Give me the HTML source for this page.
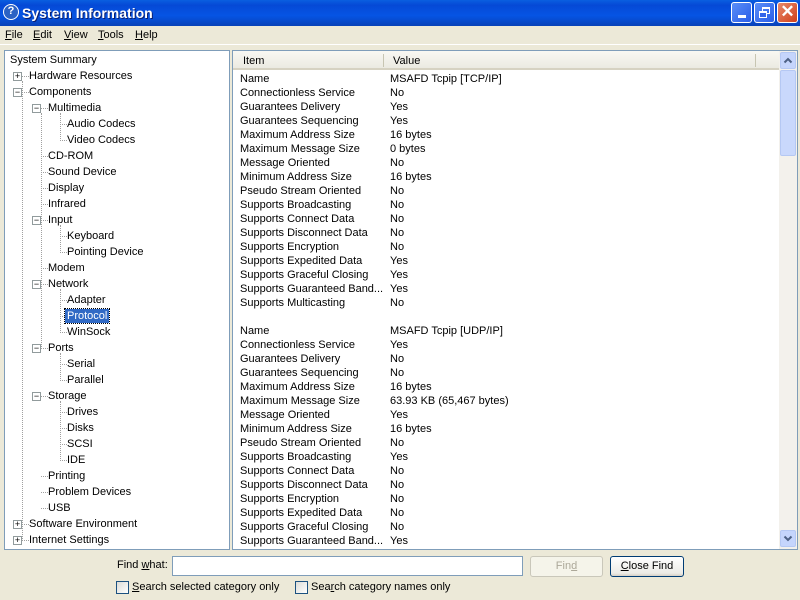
<!DOCTYPE html>
<html><head><style>
*{margin:0;padding:0;box-sizing:border-box}
body{width:800px;height:600px;overflow:hidden;background:#ece9d8;font-family:"Liberation Sans",Tahoma,sans-serif;font-size:11px;color:#000;position:relative}
.abs{position:absolute}
#title{left:0;top:0;width:800px;height:26px;background:linear-gradient(#0a5fe0,#0549d6 20%,#0654e4 60%,#0842b8);}
#title span{position:absolute;left:22px;top:5px;color:#fff;font-weight:bold;font-size:14px;text-shadow:1px 1px #0a1e6e}
.tb{position:absolute;top:2px;width:21px;height:21px;border:1px solid #fff;border-radius:3px;background:linear-gradient(135deg,#5a8ef8,#2a5ee8)}
#menu{top:26px;left:0;width:800px;height:19px;border-bottom:1px solid #fff}
#menu span{position:absolute;top:3px}
.pane{background:#fff;border:1px solid #7f9db9}
.t{position:absolute;height:14px;line-height:14px;white-space:nowrap}
.exp{position:absolute;width:9px;height:9px;border:1px solid #919b9c;background:#fff;font-size:9px;line-height:7px;text-align:center;color:#000}
.h{position:absolute;width:7px;border-top:1px dotted #a0a0a0}
.btn{position:absolute;border:1px solid #003c74;border-radius:3px;background:linear-gradient(#fff,#ecebe6 85%,#d6d0c5);text-align:center;line-height:19px}
.cb{position:absolute;width:13px;height:13px;border:1px solid #1c5180;background:linear-gradient(135deg,#dcdcd7,#fff)}
</style></head><body>
<div id="title" class="abs">
<div class="abs" style="left:3px;top:4px;width:16px;height:16px;border-radius:50%;background:#2b62c4;border:1.5px solid #fff;color:#fff;font-weight:bold;font-size:11px;line-height:13px;text-align:center">?</div>
<span>System Information</span>
<div class="tb" style="left:731px"><div class="abs" style="left:6px;top:12px;width:8px;height:3px;background:#fff"></div></div>
<div class="tb" style="left:754px"><div class="abs" style="left:7px;top:4px;width:8px;height:7px;border:1px solid #fff;border-top-width:2px"></div><div class="abs" style="left:4px;top:8px;width:8px;height:7px;border:1px solid #fff;border-top-width:2px;background:#3566ea"></div></div>
<div class="tb" style="left:777px;background:linear-gradient(135deg,#e88a6a,#d0401c);color:#fff;font-size:17px;line-height:18px;text-align:center;font-weight:bold">✕</div>
</div>
<div id="menu" class="abs">
<span style="left:5px"><u>F</u>ile</span><span style="left:33px"><u>E</u>dit</span><span style="left:64px"><u>V</u>iew</span><span style="left:98px"><u>T</u>ools</span><span style="left:135px"><u>H</u>elp</span>
</div>

<div class="abs pane" style="left:4px;top:50px;width:226px;height:500px">
<div class="abs" style="left:17px;top:30px;height:460px;border-left:1px dotted #a0a0a0"></div>
<div class="abs" style="left:36px;top:62px;height:236px;border-left:1px dotted #a0a0a0"></div>
<div class="abs" style="left:55px;top:62px;height:28px;border-left:1px dotted #a0a0a0"></div>
<div class="abs" style="left:55px;top:174px;height:28px;border-left:1px dotted #a0a0a0"></div>
<div class="abs" style="left:55px;top:238px;height:44px;border-left:1px dotted #a0a0a0"></div>
<div class="abs" style="left:55px;top:302px;height:28px;border-left:1px dotted #a0a0a0"></div>
<div class="abs" style="left:55px;top:350px;height:60px;border-left:1px dotted #a0a0a0"></div>
</div>
<div class="abs" style="left:4px;top:51px;width:226px;height:500px">
<div class="t" style="left:6px;top:2px">System Summary</div>
<div class="exp" style="left:9px;top:21px">+</div><div class="h" style="left:18px;top:25px"></div><div class="t" style="left:25px;top:18px">Hardware Resources</div>
<div class="exp" style="left:9px;top:37px">−</div><div class="h" style="left:18px;top:41px"></div><div class="t" style="left:25px;top:34px">Components</div>
<div class="exp" style="left:28px;top:53px">−</div><div class="h" style="left:37px;top:57px"></div><div class="t" style="left:44px;top:50px">Multimedia</div>
<div class="h" style="left:56px;top:73px"></div><div class="t" style="left:63px;top:66px">Audio Codecs</div>
<div class="h" style="left:56px;top:89px"></div><div class="t" style="left:63px;top:82px">Video Codecs</div>
<div class="h" style="left:37px;top:105px"></div><div class="t" style="left:44px;top:98px">CD-ROM</div>
<div class="h" style="left:37px;top:121px"></div><div class="t" style="left:44px;top:114px">Sound Device</div>
<div class="h" style="left:37px;top:137px"></div><div class="t" style="left:44px;top:130px">Display</div>
<div class="h" style="left:37px;top:153px"></div><div class="t" style="left:44px;top:146px">Infrared</div>
<div class="exp" style="left:28px;top:165px">−</div><div class="h" style="left:37px;top:169px"></div><div class="t" style="left:44px;top:162px">Input</div>
<div class="h" style="left:56px;top:185px"></div><div class="t" style="left:63px;top:178px">Keyboard</div>
<div class="h" style="left:56px;top:201px"></div><div class="t" style="left:63px;top:194px">Pointing Device</div>
<div class="h" style="left:37px;top:217px"></div><div class="t" style="left:44px;top:210px">Modem</div>
<div class="exp" style="left:28px;top:229px">−</div><div class="h" style="left:37px;top:233px"></div><div class="t" style="left:44px;top:226px">Network</div>
<div class="h" style="left:56px;top:249px"></div><div class="t" style="left:63px;top:242px">Adapter</div>
<div class="h" style="left:56px;top:265px"></div><div class="t" style="left:61px;top:258px;background:#316ac5;color:#fff;padding:0 2px;outline:1px dotted #000">Protocol</div>
<div class="h" style="left:56px;top:281px"></div><div class="t" style="left:63px;top:274px">WinSock</div>
<div class="exp" style="left:28px;top:293px">−</div><div class="h" style="left:37px;top:297px"></div><div class="t" style="left:44px;top:290px">Ports</div>
<div class="h" style="left:56px;top:313px"></div><div class="t" style="left:63px;top:306px">Serial</div>
<div class="h" style="left:56px;top:329px"></div><div class="t" style="left:63px;top:322px">Parallel</div>
<div class="exp" style="left:28px;top:341px">−</div><div class="h" style="left:37px;top:345px"></div><div class="t" style="left:44px;top:338px">Storage</div>
<div class="h" style="left:56px;top:361px"></div><div class="t" style="left:63px;top:354px">Drives</div>
<div class="h" style="left:56px;top:377px"></div><div class="t" style="left:63px;top:370px">Disks</div>
<div class="h" style="left:56px;top:393px"></div><div class="t" style="left:63px;top:386px">SCSI</div>
<div class="h" style="left:56px;top:409px"></div><div class="t" style="left:63px;top:402px">IDE</div>
<div class="h" style="left:37px;top:425px"></div><div class="t" style="left:44px;top:418px">Printing</div>
<div class="h" style="left:37px;top:441px"></div><div class="t" style="left:44px;top:434px">Problem Devices</div>
<div class="h" style="left:37px;top:457px"></div><div class="t" style="left:44px;top:450px">USB</div>
<div class="exp" style="left:9px;top:469px">+</div><div class="h" style="left:18px;top:473px"></div><div class="t" style="left:25px;top:466px">Software Environment</div>
<div class="exp" style="left:9px;top:485px">+</div><div class="h" style="left:18px;top:489px"></div><div class="t" style="left:25px;top:482px">Internet Settings</div>
</div>

<div class="abs pane" style="left:232px;top:50px;width:566px;height:500px;overflow:hidden">
<div class="abs" style="left:0;top:0;width:546px;height:19px;background:linear-gradient(#f9f8f3,#ebeae2);border-bottom:2px solid #d6d2c2">
<div class="abs" style="left:10px;top:4px">Item</div>
<div class="abs" style="left:160px;top:4px">Value</div>
<div class="abs" style="left:150px;top:3px;height:13px;border-left:1px solid #c7c5b2"></div>
<div class="abs" style="left:522px;top:3px;height:13px;border-left:1px solid #c7c5b2"></div>
</div>
<div class="abs" style="left:546px;top:0;width:18px;height:498px;background:#f3f1ec">
<div class="abs" style="left:1px;top:1px;width:16px;height:17px;border:1px solid #b5c8f3;border-radius:2px;background:#c5d5fc"><svg width="14" height="15" style="position:absolute;left:0;top:0"><path d="M3.5 9.5L7 6L10.5 9.5" stroke="#4d6185" stroke-width="2" fill="none"/></svg></div>
<div class="abs" style="left:1px;top:19px;width:16px;height:86px;border:1px solid #b5c8f3;border-radius:2px;background:#c9d8fc"></div>
<div class="abs" style="left:1px;top:479px;width:16px;height:17px;border:1px solid #b5c8f3;border-radius:2px;background:#c5d5fc"><svg width="14" height="15" style="position:absolute;left:0;top:0"><path d="M3.5 5.5L7 9L10.5 5.5" stroke="#4d6185" stroke-width="2" fill="none"/></svg></div>
</div>
<div class="abs" style="left:7px;top:21px;line-height:14px;white-space:nowrap">
Name<br>Connectionless Service<br>Guarantees Delivery<br>Guarantees Sequencing<br>Maximum Address Size<br>Maximum Message Size<br>Message Oriented<br>Minimum Address Size<br>Pseudo Stream Oriented<br>Supports Broadcasting<br>Supports Connect Data<br>Supports Disconnect Data<br>Supports Encryption<br>Supports Expedited Data<br>Supports Graceful Closing<br>Supports Guaranteed Band...<br>Supports Multicasting<br><br>Name<br>Connectionless Service<br>Guarantees Delivery<br>Guarantees Sequencing<br>Maximum Address Size<br>Maximum Message Size<br>Message Oriented<br>Minimum Address Size<br>Pseudo Stream Oriented<br>Supports Broadcasting<br>Supports Connect Data<br>Supports Disconnect Data<br>Supports Encryption<br>Supports Expedited Data<br>Supports Graceful Closing<br>Supports Guaranteed Band...
</div>
<div class="abs" style="left:157px;top:21px;line-height:14px;white-space:nowrap">
MSAFD Tcpip [TCP/IP]<br>No<br>Yes<br>Yes<br>16 bytes<br>0 bytes<br>No<br>16 bytes<br>No<br>No<br>No<br>No<br>No<br>Yes<br>Yes<br>Yes<br>No<br><br>MSAFD Tcpip [UDP/IP]<br>Yes<br>No<br>No<br>16 bytes<br>63.93 KB (65,467 bytes)<br>Yes<br>16 bytes<br>No<br>Yes<br>No<br>No<br>No<br>No<br>No<br>Yes
</div>
</div>

<div class="abs" style="left:117px;top:559px">Find <u>w</u>hat:</div>
<div class="abs" style="left:172px;top:556px;width:351px;height:20px;background:#fff;border:1px solid #7f9db9"></div>
<div class="btn" style="left:530px;top:556px;width:73px;height:21px;border-color:#c9c7ba;background:#f5f4ea;color:#aca899">Fin<u>d</u></div>
<div class="btn" style="left:610px;top:556px;width:74px;height:21px"><u>C</u>lose Find</div>
<div class="cb" style="left:116px;top:581px"></div><div class="abs" style="left:132px;top:581px"><u>S</u>earch selected category only</div>
<div class="cb" style="left:295px;top:581px"></div><div class="abs" style="left:311px;top:581px">Sea<u>r</u>ch category names only</div>
</body></html>
